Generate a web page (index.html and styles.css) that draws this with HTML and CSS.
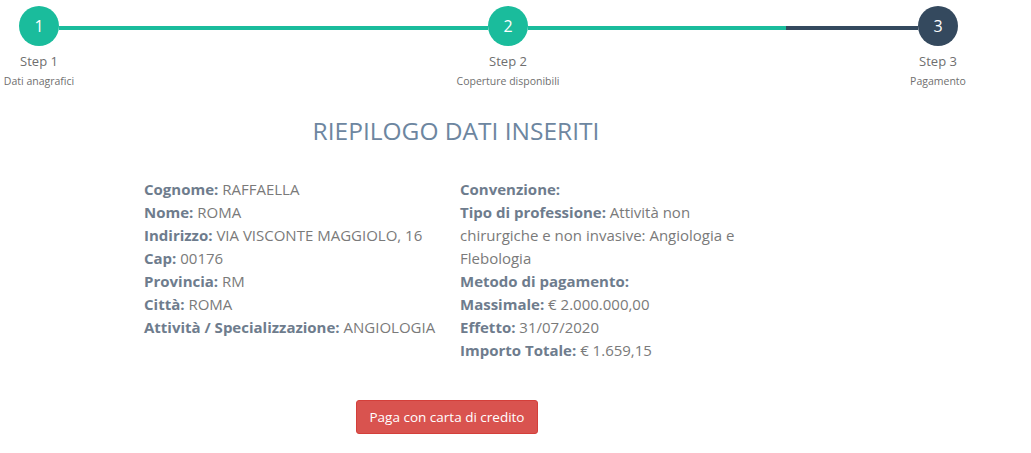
FILE: index.html
```html
<!DOCTYPE html>
<html lang="it">
<head>
  <meta charset="UTF-8">
  <title>Riepilogo</title>
  <link rel="stylesheet" href="styles.css">
</head>
<body>

  <div class="stepper">
    <div class="step">
      <div class="circle done">1</div>
      <div class="step-title">Step 1</div>
      <div class="step-sub">Dati anagrafici</div>
    </div>
    <div class="bar bar-one"></div>
    <div class="step">
      <div class="circle done">2</div>
      <div class="step-title">Step 2</div>
      <div class="step-sub">Coperture disponibili</div>
    </div>
    <div class="bar bar-two"><span class="bar-fill"></span></div>
    <div class="step">
      <div class="circle current">3</div>
      <div class="step-title">Step 3</div>
      <div class="step-sub">Pagamento</div>
    </div>
  </div>

  <div class="summary">
    <h2>RIEPILOGO DATI INSERITI</h2>

    <div class="cols">
      <div class="col">
        <div><b>Cognome:</b> RAFFAELLA</div>
        <div><b>Nome:</b> ROMA</div>
        <div><b>Indirizzo:</b> VIA VISCONTE MAGGIOLO, 16</div>
        <div><b>Cap:</b> 00176</div>
        <div><b>Provincia:</b> RM</div>
        <div><b>Città:</b> ROMA</div>
        <div><b>Attività / Specializzazione:</b> ANGIOLOGIA</div>
      </div>
      <div class="col">
        <div><b>Convenzione:</b></div>
        <div><b>Tipo di professione:</b> Attività non chirurgiche e non invasive: Angiologia e Flebologia</div>
        <div><b>Metodo di pagamento:</b></div>
        <div><b>Massimale:</b> € 2.000.000,00</div>
        <div><b>Effetto:</b> 31/07/2020</div>
        <div><b>Importo Totale:</b> € 1.659,15</div>
      </div>
    </div>

    <div class="actions">
      <button class="btn-pay">Paga con carta di credito</button>
    </div>
  </div>

</body>
</html>
```

FILE: styles.css
```css
body {
  margin: 0;
  font-family: "Open Sans", Arial, sans-serif;
  color: #7a7a7a;
  background: #fff;
}

/* stepper */
.stepper {
  display: flex;
  align-items: flex-start;
  padding: 6px 0 0 19px;
}
.step {
  width: 40px;
  display: flex;
  flex-direction: column;
  align-items: center;
}
.circle {
  width: 40px;
  height: 40px;
  border-radius: 50%;
  color: #fff;
  font-size: 16px;
  line-height: 40px;
  text-align: center;
}
.circle.done { background: #1abc9c; }
.circle.current { background: #34495e; }
.step-title {
  margin: 6px -60px 0;
  font-size: 13px;
  line-height: 18px;
  color: #6f6f6f;
  white-space: nowrap;
}
.step-sub {
  margin: 4px -60px 0;
  font-size: 10.5px;
  line-height: 15px;
  color: #6f6f6f;
  white-space: nowrap;
}
.bar {
  height: 4px;
  margin-top: 20px;
  background: #1abc9c;
}
.bar-one { width: 429px; }
.bar-two {
  width: 390px;
  background: #34495e;
  display: flex;
}
.bar-fill {
  width: 258px;
  background: #1abc9c;
}

/* summary */
.summary {
  width: 616px;
  margin-left: 144px;
}
.summary h2 {
  margin: 27px 0 0;
  padding-left: 8px;
  text-align: center;
  font-size: 24.5px;
  font-weight: 400;
  line-height: 30px;
  color: #6d86a0;
}
.cols {
  display: grid;
  grid-template-columns: 300px 300px;
  gap: 16px;
  margin-top: 32px;
  font-size: 15px;
  line-height: 23px;
}
.col b {
  font-weight: 700;
  color: #6e7c8d;
}
.actions {
  margin-top: 38px;
  padding-right: 10px;
  text-align: center;
}
.btn-pay {
  height: 34px;
  padding: 0 13px;
  font-family: inherit;
  font-size: 13.5px;
  color: #fff;
  background: #d9534f;
  border: 1px solid #d43f3a;
  border-radius: 3px;
}
```
